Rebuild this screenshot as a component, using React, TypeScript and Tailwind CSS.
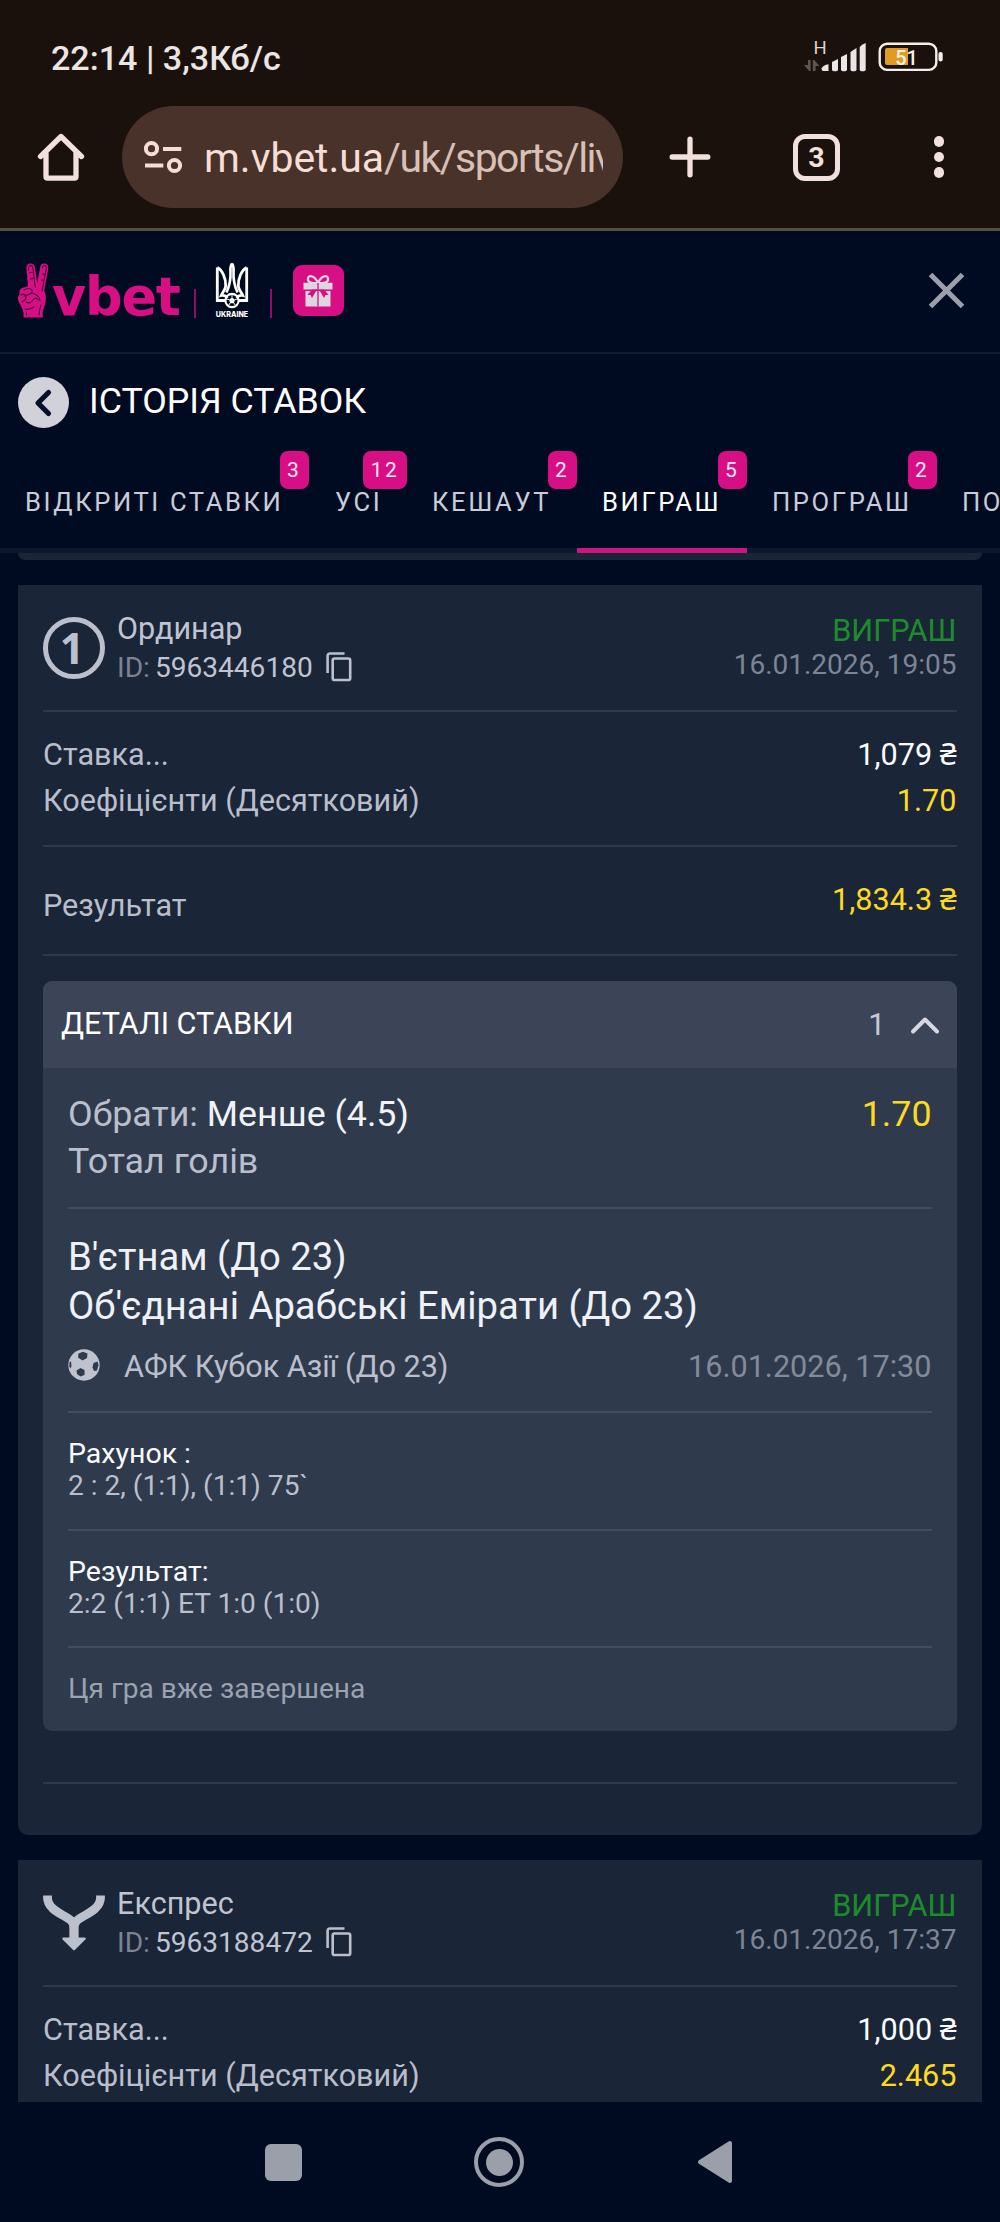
import type { ReactNode } from "react";

const CARD = "bg-[#1a2538]";

function StatusBar() {
  return (
    <div className="flex h-[106px] items-center pt-[10px] pl-[51px] pr-[57px]">
      <span className="text-[34.100px] leading-[40px] font-medium text-[#ebe6e3]">22:14 | 3,3Кб/с</span>
      <svg className="-mt-[2px] ml-auto" width="140" height="56" viewBox="803 28 140 56" fill="none">
        <text x="813.4" y="53" fontSize="18.5" fontFamily="Roboto" fontWeight="400" fill="#d9d4d1">H</text>
        <g fill="#5d5551">
          <path d="M808 59h2.6v11h-1.5l-5-6h3.9z" />
          <path d="M812.8 70V59h1.5l5 6h-3.7v5z" />
        </g>
        <g fill="#ebe6e3">
          <path d="M821.5 67.5q1.5-3.5 7-4.3V70h-5q-2 0-2-2.5z" />
          <path d="M832 61l6-3v10.5q0 1.8-1.8 1.8h-2.4q-1.8 0-1.8-1.8z" />
          <path d="M841 56l6-3v15.5q0 1.8-1.8 1.8h-2.4q-1.8 0-1.8-1.8z" />
          <path d="M850.5 51l6-4v21.5q0 1.8-1.8 1.8h-2.400q-1.800 0-1.800-1.800z" />
          <path d="M859.700 46q2.500-3 6-4v26.500q0 1.800-1.800 1.800h-2.400q-1.800 0-1.800-1.800z" />
        </g>
        <rect x="879.700" y="42.700" width="56.600" height="26.200" rx="7.500" stroke="#f2efed" strokeWidth="2.400" />
        <path d="M887 47h21v17h-21a2 2 0 0 1-2-2V49a2 2 0 0 1 2-2z" fill="#e19a22" />
        <rect x="938.500" y="51" width="4.200" height="9.500" rx="2" fill="#f2efed" />
        <text x="895.2" y="63.600" fontSize="20" fontFamily="Roboto" fontWeight="500" fill="#f6f0e6">51</text>
      </svg>
    </div>
  );
}

function BrowserBar() {
  return (
    <div className="flex h-[102px] items-center">
      <svg className="ml-[37px]" width="48" height="50" viewBox="37 132 48 50" fill="none" stroke="#f1e0dc" strokeWidth="5.300" strokeLinecap="round" strokeLinejoin="round">
        <path d="M40.500 156.500 61 136.500l20.500 20M46 153v23.500q0 1.700 1.700 1.700h26.600q1.700 0 1.700-1.700V153" />
      </svg>
      <div className="ml-[37px] flex h-[102px] w-[501px] items-center rounded-full bg-[#493229] pr-[20px] pl-[21px]">
        <svg className="shrink-0" width="40" height="34" viewBox="143 140 40 34" fill="none" stroke="#f6ddd5" strokeWidth="4">
          <circle cx="151.500" cy="148.700" r="5.600" />
          <path d="M163 149h18.300M145 165.500h18.300" />
          <circle cx="174.500" cy="165.500" r="5.600" />
        </svg>
        <div className="mt-[2px] ml-[21px] overflow-hidden text-[40.900px] leading-[60px] whitespace-nowrap text-[#f6ddd5]">
          m.vbet.ua<span className="tracking-[-1.500px] text-[#d9c0b7]">/uk/sports/live</span>
        </div>
      </div>
      <svg className="ml-[46px]" width="42" height="42" viewBox="0 0 42 42" stroke="#f1e0dc" strokeWidth="5.300" strokeLinecap="round">
        <path d="M21 3.200v35.600M3.200 21h35.600" />
      </svg>
      <div className="ml-[82px] flex h-[47px] w-[47px] items-center justify-center rounded-[12px] border-[5.300px] border-[#f1e0dc] pt-[2px] text-[28.500px] leading-[30px] font-bold text-[#f1e0dc]">
        3
      </div>
      <div className="ml-[93.500px] flex flex-col gap-[5px]">
        <i className="h-[10.500px] w-[10.500px] rounded-full bg-[#f1e0dc]" />
        <i className="h-[10.500px] w-[10.500px] rounded-full bg-[#f1e0dc]" />
        <i className="h-[10.500px] w-[10.500px] rounded-full bg-[#f1e0dc]" />
      </div>
    </div>
  );
}

function HandLogo() {
  return (
    <svg width="34" height="58" viewBox="0 0 34 58" fill="none">
      <path
        d="M9.500 7C9 3 11 1.500 13.500 1.500S17.500 3 18 6l2.200 15 3-16c.6-3 2.500-4 5-3.500s3.500 2.500 3 5.500l-4 22c1.500 3 2 6 1.500 10-.5 5-3 8-3 12.500v4H6.500v-4C6 45 2 42 1 37.500.3 34 3 33.500 2.500 31c-.4-3 1.500-5 4-5.500 1.500-.3 3-1 4.500-1z"
        fill="#d80f84"
      />
      <g stroke="#4a0a3c" strokeWidth="1.100" strokeLinecap="round">
        <path d="M11.600 8c-.3-3 .6-4.500 2-4.500s2.200 1.500 2.500 4l2.200 18M25.200 6c.5-2 1.500-2.800 2.800-2.400s1.600 1.600 1.300 3.300L25 29M12.500 11l2.500-.8M13.500 17l2.500-.6M25.500 12l2.500.5M24.500 18l2.500.5" />
        <path d="M7 28c5-3 9-1 8 2s-5 2.500-8 4M4 33c3-2 6 0 5 3s-3 3-4 4M15 31c4 1 8 4 8 8M9 40c3 2 5 1 7-2s4-2 5 0M8 47c3 1 6 0 9-2M9.500 50v3M24 43c-1 3-2 6-2 10" />
      </g>
    </svg>
  );
}

function Trident() {
  return (
    <svg width="34" height="60" viewBox="0 0 34 60" fill="none" stroke="#fff">
      <path d="M2.300 5.500C7.500 8 11 17 10.700 24c0 3-3 6-4.500 9.500 3-.6 5 .3 6 2.500M2.300 5.500V38.500H11" strokeWidth="2.800" />
      <path d="M31.700 5.500C26.500 8 23 17 23.300 24c0 3 3 6 4.500 9.500-3-.6-5 .3-6 2.500M31.700 5.500V38.500H23" strokeWidth="2.800" />
      <path d="M17 1.500c1.800 3 1.800 6 1.500 9-.3 7 .8 13 4 20M17 1.500c-1.800 3-1.800 6-1.500 9 .3 7-.8 13-4 20" strokeWidth="2.600" />
      <circle cx="17" cy="38.500" r="6.600" strokeWidth="2.200" />
      <path d="M17 35.500l3 2.200-1.200 3.500h-3.600L14 37.700z" fill="#fff" stroke="none" />
      <path d="M17 32.500v3M20 37.700l3-1M18.800 41l1.700 2.500M15.200 41l-1.700 2.500M14 37.700l-3-1" strokeWidth="1" />
      <text x="0.800" y="55.200" fontSize="7" fontFamily="Inter" fontWeight="800" fill="#fff" stroke="none" textLength="32.400" lengthAdjust="spacingAndGlyphs">UKRAINE</text>
    </svg>
  );
}

function Gift() {
  return (
    <div className="flex h-[51px] w-[51px] items-center justify-center rounded-[9px] bg-[#d80f84]">
      <svg width="30" height="33" viewBox="0 0 30 33" fill="none">
        <path d="M15 9C12 2 6 0 5 4.500S10 9 15 9zM15 9c3-7 9-9 10-4.500S20 9 15 9z" stroke="#dcd6df" strokeWidth="2.200" />
        <path d="M0.500 8.800h29v6.700h-29zM2.500 17h25v15.500h-25z" fill="#dcd6df" />
        <path d="M15 9v23.500" stroke="#d80f84" strokeWidth="1.300" />
        <path d="M14 15.500 9 24l-1.500-3-3.200 0L9 15.500zM16 15.500 21 24l1.500-3 3.200 0L21 15.500z" fill="#d80f84" />
      </svg>
    </div>
  );
}

function SiteHeader() {
  return (
    <div className="flex h-[123px] items-start border-b-2 border-[#111b33] pt-[31px] pl-[17px]">
      <HandLogo />
      <span className="mt-[5px] ml-px w-[130px] font-['DejaVu_Sans'] text-[52.500px] leading-[60px] font-bold tracking-[-1.200px] text-[#d80f84]">vbet</span>
      <i className="mt-[27px] ml-[12px] h-[29px] w-[2px] bg-[#8f0f62]" />
      <div className="ml-[19px]">
        <Trident />
      </div>
      <i className="mt-[27px] ml-[21px] h-[29px] w-[2px] bg-[#8f0f62]" />
      <div className="mt-[3px] ml-[20.500px]">
        <Gift />
      </div>
      <svg className="mt-[9.500px] mr-[35px] ml-auto" width="37" height="37" viewBox="0 0 37 37" stroke="#9c9fab" strokeWidth="5">
        <path d="M2.500 2.500l32 32M34.500 2.500l-32 32" />
      </svg>
    </div>
  );
}

const tabs = [
  { label: "ВІДКРИТІ СТАВКИ", count: "3", width: "w-[309px]", pad: "pl-[25px]" },
  { label: "УСІ", count: "12", width: "w-[98px]", pad: "pl-[26px]" },
  { label: "КЕШАУТ", count: "2", width: "w-[170px]", pad: "pl-[25px]" },
  { label: "ВИГРАШ", count: "5", width: "w-[170px]", pad: "pl-[25px]", active: true },
  { label: "ПРОГРАШ", count: "2", width: "w-[190px]", pad: "pl-[25px]" },
  { label: "ПО", count: "", width: "w-[63px]", pad: "pl-[25px]" },
];

function Tabs() {
  return (
    <div className="flex h-[102px] overflow-hidden">
      {tabs.map((t) => (
        <div
          key={t.label}
          className={`relative flex shrink-0 items-center border-b-[5.500px] pt-[4px] text-[25.600px] leading-[30px] tracking-[2.600px] whitespace-nowrap ${t.width} ${t.pad} ${
            t.active ? "border-[#cc1583] text-white" : "border-[#0d182e] text-[#c9ccd8]"
          }`}
        >
          {t.label}
          {t.count && (
            <span className="absolute top-0 right-0 flex h-[38px] items-center rounded-[8px] bg-[#d80f84] pr-[7.500px] pb-px pl-[7.500px] text-[21px] leading-[24px] tracking-[2.600px] text-[#fbe9f5]">
              {t.count}
            </span>
          )}
        </div>
      ))}
    </div>
  );
}

function SingleIcon() {
  return (
    <div className="flex h-[62px] w-[62px] items-center justify-center rounded-full border-[5px] border-[#bcc0cc] pr-[4px] font-['Open_Sans'] text-[43px] leading-[50px] font-bold text-[#bcc0cc]">
      1
    </div>
  );
}

function ExpressIcon() {
  return (
    <svg width="62" height="62" viewBox="0 -3.500 62 62" fill="none" stroke="#bcc0cc" strokeWidth="8.800">
      <path d="M4.500 0v2C4.500 12 15 17 22 21c6 3.400 9 5.500 9 12v11" />
      <path d="M57.500 0v2C57.500 12 47 17 40 21c-6 3.400-9 5.500-9 12v11" />
      <path d="M20.500 43.200h21L31 53.500z" fill="#bcc0cc" strokeWidth="2.500" strokeLinejoin="round" />
    </svg>
  );
}

function CopyIcon() {
  return (
    <svg width="26" height="30" viewBox="0 0 26 30" fill="none" stroke="#bcc0cc" strokeWidth="2.600">
      <path d="M1.600 21V4q0-2.500 2.500-2.500H18.500" />
      <rect x="6.700" y="6.500" width="17.500" height="21.500" rx="1.800" />
    </svg>
  );
}

function Divider({ inner = false }: { inner?: boolean }) {
  return <div className={inner ? "h-[2px] bg-[#434d5f]" : "h-[2px] bg-[#2e394b]"} />;
}

type Bet = { icon: ReactNode; kind: string; id: string; date: string; stake: string; odds: string };

function BetSummary({ bet }: { bet: Bet }) {
  return (
    <>
      <div className="flex h-[125px] pt-[24px]">
        <div className="mt-[8px]">{bet.icon}</div>
        <div className="ml-[12px]">
          <div className="text-[30.600px] leading-[39px] text-[#c0c4d0]">{bet.kind}</div>
          <div className="flex h-[39px] items-center text-[28.100px] leading-[39px]">
            <span className="text-[#7c8394]">ID:</span>
            <span className="ml-[5px] text-[#c0c4d0]">{bet.id}</span>
            <span className="-mt-[2px] ml-[13.500px]">
              <CopyIcon />
            </span>
          </div>
        </div>
        <div className="mt-[5px] ml-auto text-right leading-[34px]">
          <div className="text-[30.700px] text-[#1c8c2b]">ВИГРАШ</div>
          <div className="text-[28px] text-[#7d8595]">{bet.date}</div>
        </div>
      </div>
      <Divider />
      <div className="h-[133px] pt-[20px] text-[30.600px] leading-[46.300px] text-[#babecb]">
        <div className="flex justify-between">
          <span>Ставка...</span>
          <span className="text-[#fbfcff]">{bet.stake}</span>
        </div>
        <div className="flex justify-between">
          <span>Коефіцієнти (Десятковий)</span>
          <span className="text-[#fdda1f]">{bet.odds}</span>
        </div>
      </div>
    </>
  );
}

function Ball() {
  return (
    <svg width="32" height="32" viewBox="0 0 32 32">
      <circle cx="16" cy="16" r="15.700" fill="#bfc3cf" />
      <g fill="#2f3a4d">
        <path d="M10.500 4.500l4.500-1.700 4.500 1.700-.5 4.500-4.500 2.500-4.500-3z" />
        <path d="M8.500 21.500l4-2.500 4 2 0 5-4 1.500-3.500-2.500z" />
        <path d="M25.500 14l4-1.500 1 3.500-1.500 5.500-3 .5-1.500-3.500z" />
        <path d="M1.500 13l1.500-.500.5 4.500-1 2.500-1.200-2z" />
      </g>
    </svg>
  );
}

function Details() {
  return (
    <div className="mt-[25px] h-[750px] overflow-hidden rounded-[9px] bg-[#2f3a4d]">
      <div className="flex h-[87px] items-center bg-[#3c4457] pr-[16px] pb-[2px] pl-[18px] text-[30.600px] leading-[40px]">
        <span className="text-white">ДЕТАЛІ СТАВКИ</span>
        <span className="mt-[3px] ml-auto text-[#c6c9d6]">1</span>
        <svg className="mt-[3px] ml-[23px]" width="32" height="20" viewBox="0 0 32 20" fill="none" stroke="#d5d8e3" strokeWidth="4" strokeLinecap="round" strokeLinejoin="round">
          <path d="M4 16.500 16 4.500l12 12" />
        </svg>
      </div>
      <div className="px-[25px] text-[#babfcb]">
        <div className="flex h-[139px] justify-between pt-[23px] text-[35.800px] leading-[47px]">
          <div>
            <div>
              Обрати: <span className="text-[#f1f3f8]">Менше (4.5)</span>
            </div>
            <div>Тотал голів</div>
          </div>
          <span className="text-[#fdda1f]">1.70</span>
        </div>
        <Divider inner />
        <div className="h-[202px] pt-[23.500px]">
          <div className="text-[38.250px] leading-[49px] text-[#eef1f7]">
            <div>В'єтнам (До 23)</div>
            <div>Об'єднані Арабські Емірати (До 23)</div>
          </div>
          <div className="mt-[13.500px] flex h-[46px] items-center text-[30.600px] leading-[46px]">
            <span className="-mt-[4px]">
              <Ball />
            </span>
            <span className="ml-[24px]">АФК Кубок Азії (До 23)</span>
            <span className="ml-auto text-[#838a9a]">16.01.2026, 17:30</span>
          </div>
        </div>
        <Divider inner />
        <div className="h-[115.500px] pt-[25px] text-[28.100px] leading-[32.400px]">
          <div className="text-[28.500px] text-[#fafbff]">Рахунок :</div>
          <div>2 : 2, (1:1), (1:1) 75`</div>
        </div>
        <Divider inner />
        <div className="h-[115.500px] pt-[25px] text-[28.100px] leading-[32.400px]">
          <div className="text-[28.500px] text-[#fafbff]">Результат:</div>
          <div>2:2 (1:1) ET 1:0 (1:0)</div>
        </div>
        <Divider inner />
        <div className="pt-[25px] text-[28.100px] leading-[32.400px] text-[#9ba2b0]">Ця гра вже завершена</div>
      </div>
    </div>
  );
}

const single: Bet = { icon: <SingleIcon />, kind: "Ординар", id: "5963446180", date: "16.01.2026, 19:05", stake: "1,079 ₴", odds: "1.70" };
const express: Bet = { icon: <ExpressIcon />, kind: "Експрес", id: "5963188472", date: "16.01.2026, 17:37", stake: "1,000 ₴", odds: "2.465" };

function NavBar() {
  return (
    <div className="flex h-[120px] items-center justify-center pr-[2px]">
      <div className="flex w-[215.500px] justify-center">
        <i className="h-[37px] w-[37px] rounded-[6px] bg-[#9b9fa9]" />
      </div>
      <div className="flex w-[215.500px] justify-center">
        <div className="flex h-[50px] w-[50px] items-center justify-center rounded-full border-[4.600px] border-[#9b9fa9]">
          <i className="h-[27px] w-[27px] rounded-full bg-[#9b9fa9]" />
        </div>
      </div>
      <div className="flex w-[215.500px] justify-center">
        <svg width="36" height="44" viewBox="0 0 36 44" fill="#9b9fa9" stroke="#9b9fa9" strokeWidth="4" strokeLinejoin="round">
          <path d="M3 22 33 3v38z" />
        </svg>
      </div>
    </div>
  );
}

export default function App() {
  return (
    <div className="h-[2222px] w-[1000px] overflow-hidden bg-[#000b21] font-['Roboto','Noto_Sans',sans-serif] antialiased">
      <div className="h-[231px] border-b-[3px] border-[#564c46] bg-[#1a110d]">
        <StatusBar />
        <BrowserBar />
      </div>
      <SiteHeader />
      <div className="flex h-[97px] items-center pl-[18px]">
        <div className="flex h-[51px] w-[51px] items-center justify-center rounded-full bg-[#d0d1d9]">
          <svg width="20" height="30" viewBox="0 0 20 30" fill="none" stroke="#05102a" strokeWidth="5.200" strokeLinecap="round" strokeLinejoin="round">
            <path d="M14.500 4.500 4 15l10.500 10.500" />
          </svg>
        </div>
        <h1 className="-mt-[3px] ml-[20px] text-[35.700px] leading-[44px] text-white">ІСТОРІЯ СТАВОК</h1>
      </div>
      <Tabs />
      <div className="h-[1549px] overflow-hidden px-[18px]">
        <div className={`h-[7px] rounded-b-[8px] ${CARD}`} />
        <div className={`mt-[25px] h-[1250px] rounded-b-[10px] pr-[25.500px] pl-[25px] ${CARD}`}>
          <BetSummary bet={single} />
          <Divider />
          <div className="flex h-[107px] justify-between text-[30.600px] leading-[46px]">
            <span className="mt-[35.500px] text-[#babecb]">Результат</span>
            <span className="mt-[29.500px] text-[#fdda1f]">1,834.3 ₴</span>
          </div>
          <Divider />
          <Details />
          <div className="mt-[51px]">
            <Divider />
          </div>
        </div>
        <div className={`mt-[25px] h-[400px] pr-[25.500px] pl-[25px] ${CARD}`}>
          <BetSummary bet={express} />
        </div>
      </div>
      <NavBar />
    </div>
  );
}
